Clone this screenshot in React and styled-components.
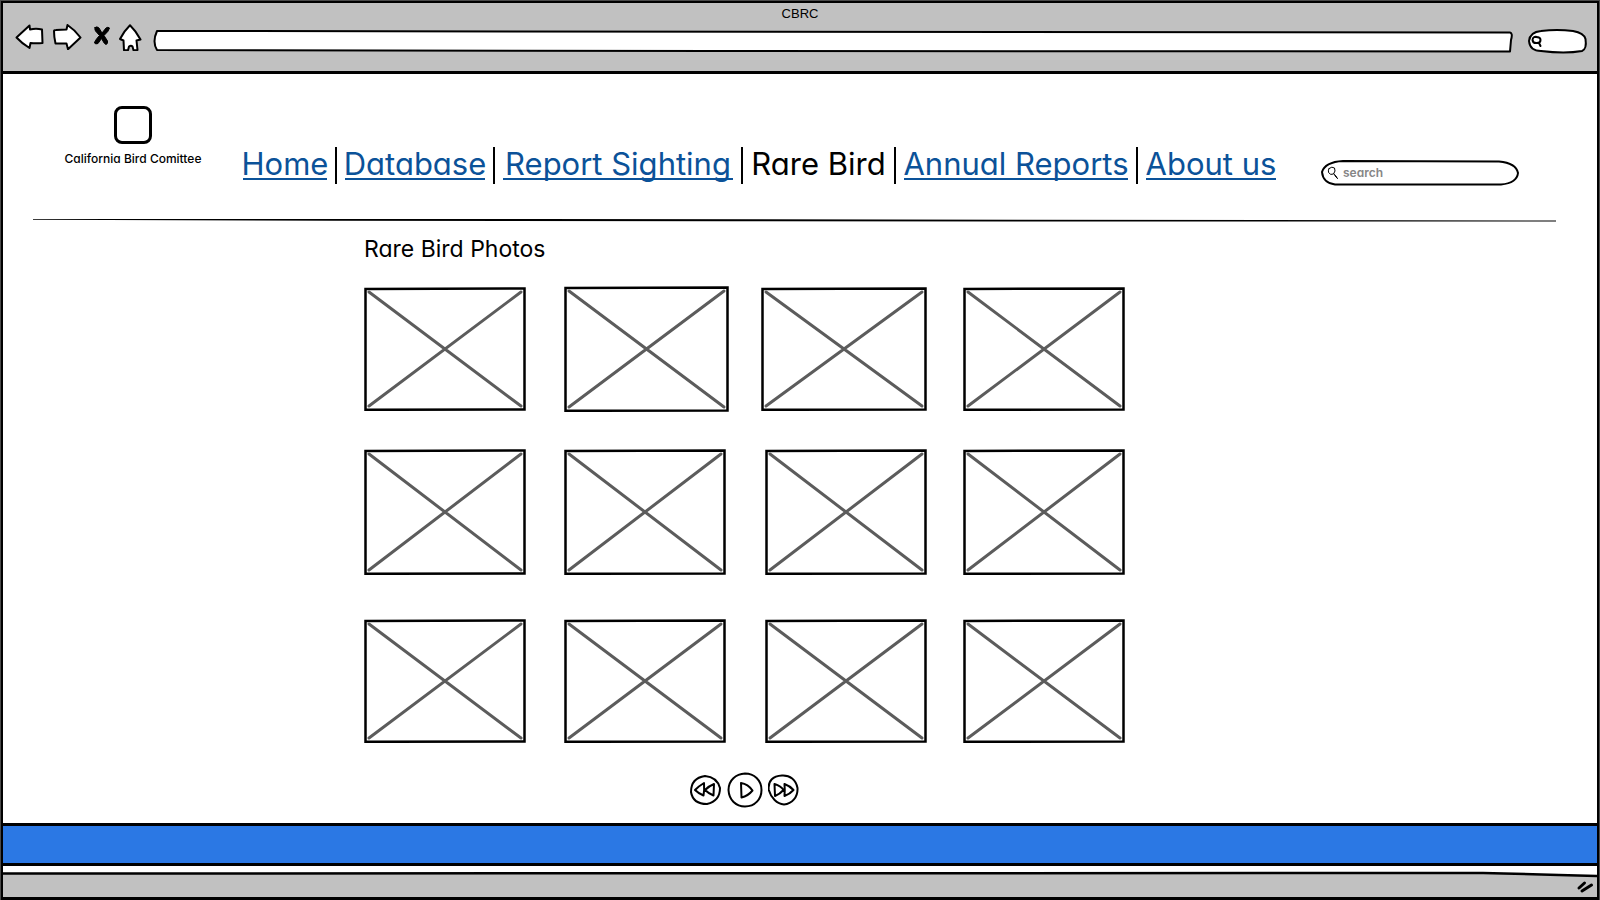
import React from "react";
import styled, { createGlobalStyle } from "styled-components";

const GlobalStyle = createGlobalStyle`
  * { box-sizing: border-box; }
  body {
    margin: 0;
    background: #fff;
    color: #000;
    font-family: Inter, "Open Sans", sans-serif;
    font-feature-settings: "cv11" 1;
  }
  button, input { font: inherit; color: inherit; }
`;

const Page = styled.div`
  min-height: 100vh;
  padding: 1px;
  display: flex;
  background: #4a4a4a;
`;

const Frame = styled.div`
  flex: 1;
  min-width: 0;
  display: flex;
  flex-direction: column;
  background: #fff;
  border: 3px solid #000;
  border-width: 2px 2px 3px;
`;

const BrowserBar = styled.header`
  height: 71px;
  padding-top: 1px;
  background: #c1c1c1;
  border-bottom: 3px solid #000;
`;

const WindowTitle = styled.div`
  height: 20px;
  line-height: 19px;
  text-align: center;
  font-family: "Liberation Sans", sans-serif;
  font-size: 13px;
`;

const Controls = styled.div`
  display: flex;
  align-items: center;
  gap: 12px;
  height: 34px;
  padding: 0 9px 0 12px;
`;

const IconGroup = styled.div`
  display: flex;
  align-self: flex-start;
  align-items: flex-start;
  gap: 8px;
`;

const IconButton = styled.button`
  display: block;
  padding: 0;
  border: 0;
  background: none;
  cursor: pointer;

  svg { display: block; }
`;

const Sketch = styled.svg`
  fill: ${(p) => p.$fill || "#fff"};
  stroke: #000;
  stroke-width: ${(p) => p.$weight || 2}px;
  stroke-linecap: round;
  stroke-linejoin: round;
`;

const Field = styled.label`
  position: relative;
  display: flex;
  align-items: center;
  flex: ${(p) => (p.$width ? `0 0 ${p.$width}px` : "1")};
  height: ${(p) => p.$height}px;
  min-width: 0;
`;

const Outline = styled(Sketch)`
  position: absolute;
  inset: 0;
  width: 100%;
  height: 100%;
  overflow: visible;

  path { vector-effect: non-scaling-stroke; }
`;

const FieldIcon = styled(Sketch)`
  position: absolute;
  left: ${(p) => p.$left}px;
`;

const FieldInput = styled.input`
  position: relative;
  width: 100%;
  height: 100%;
  padding: 0 12px 2px 22px;
  border: 0;
  outline: 0;
  background: transparent;
  font-size: 12px;
  font-weight: 600;

  &::placeholder { color: #868686; opacity: 1; }
`;

const SiteHeader = styled.div`
  display: flex;
  align-items: flex-start;
  height: 144px;
  padding: 32px 78px 0 58px;
`;

const Brand = styled.div`
  flex: 0 0 144px;
  display: flex;
  flex-direction: column;
  align-items: center;
  gap: 6px;
  margin-right: 38px;
  font-size: 12px;
  font-weight: 500;
  line-height: 18px;
  white-space: nowrap;
`;

const Logo = styled.div`
  width: 38px;
  height: 38px;
  border: 3px solid #000;
  border-radius: 8px;
`;

const Nav = styled.nav`
  display: flex;
  gap: 8px;
  margin-top: 41px;
`;

const NavItem = styled.div`
  flex: 0 0 ${(p) => p.$width}px;
  min-width: 0;
  display: flex;
  justify-content: center;
  height: 33px;
  font-size: 31px;
  line-height: 34px;
  white-space: nowrap;
`;

const NavLink = styled.a`
  flex: 1;
  min-width: 0;
  display: flex;
  justify-content: center;
  border-bottom: 2px solid #0b5299;
  color: #0b5299;
  text-decoration: none;
`;

const Divider = styled.span`
  width: 2px;
  height: 37px;
  background: #000;
`;

const SearchSlot = styled.div`
  display: flex;
  margin: 54px 0 0 auto;
`;

const Rule = styled.svg`
  display: block;
  width: calc(100% - 71px);
  height: 5px;
  margin-left: 30px;
`;

const Main = styled.main`
  flex: 1;
  padding: 12px 0 15px 361px;
`;

const Title = styled.h1`
  margin: 0;
  font-size: 23px;
  font-weight: 400;
  line-height: 28px;
`;

const Gallery = styled.div`
  display: flex;
  flex-direction: column;
  margin-top: 23px;
`;

const Row = styled.div`
  display: grid;
  grid-template-columns: ${(p) => p.$columns};
  align-items: center;
  margin-bottom: ${(p) => p.$after}px;
`;

const Placeholder = styled.svg`
  display: block;
  width: ${(p) => p.$width}px;
  height: ${(p) => p.$height}px;
`;

const Player = styled.div`
  display: flex;
  align-items: center;
  gap: 5px;
  margin: 29px 0 0 325px;
`;

const BlueBar = styled.footer`
  height: 43px;
  background: #2b78e4;
  border: solid #000;
  border-width: 3px 0;
`;

const StatusBar = styled.div`
  position: relative;
  height: 31px;
`;

const StatusFill = styled.svg`
  display: block;
  width: 100%;
  height: 31px;
`;

const Grip = styled(Sketch)`
  position: absolute;
  right: 3px;
  bottom: 2px;
`;

const links = [
  { label: "Home", width: 84 },
  { label: "Database", width: 140 },
  { label: "Report Sighting", width: 230 },
  { label: "Rare Bird", width: 135, current: true },
  { label: "Annual Reports", width: 224 },
  { label: "About us", width: 130 },
];

const rows = [
  { columns: "200px 197px 202px 162px", widths: [162, 165, 166, 162], heights: [124, 126, 124, 124], after: 37 },
  { columns: "200px 201px 198px 162px", widths: [162, 162, 162, 162], heights: [126, 126, 126, 126], after: 44 },
  { columns: "200px 201px 198px 162px", widths: [162, 162, 162, 162], heights: [124, 124, 124, 124], after: 0 },
];

function Photo({ width: w, height: h }) {
  return (
    <Placeholder $width={w} $height={h} viewBox={`0 0 ${w} ${h}`} role="img" aria-label="Bird photo">
      <path d={`M1.5 2 L${w - 1.5} 1.5 V${h - 1.5} L1.5 ${h - 1.2} Z`} fill="#fff" stroke="#000" strokeWidth="2.5" />
      <path
        d={`M5 5 L${w - 5} ${h - 5} M${w - 5} 5 L5 ${h - 5}`}
        stroke="#5c5c5c"
        strokeWidth="3"
        strokeLinecap="round"
      />
    </Placeholder>
  );
}

export default function App() {
  return (
    <>
      <GlobalStyle />
      <Page>
        <Frame>
          <BrowserBar>
            <WindowTitle>CBRC</WindowTitle>
            <Controls>
              <IconGroup>
                <IconButton aria-label="Back">
                  <Sketch width="30" height="26" viewBox="15 24 30 26">
                    <path d="M16.5 37.5 L29.5 25.5 L30 29.5 Q36 28 42 29.5 L42.5 43 Q36 43.5 30.5 43 L29.5 48 Q22 43.5 16.5 37.5Z" />
                  </Sketch>
                </IconButton>
                <IconButton aria-label="Forward">
                  <Sketch width="30" height="26" viewBox="53 24 30 26">
                    <path d="M54 31 Q54 30 56 30 L66.5 29.5 L67.5 25 Q75 30 80.5 37.5 L68 49.2 L66.5 43.5 L55.5 43.5 Q54 37 54 31Z" />
                  </Sketch>
                </IconButton>
                <IconButton aria-label="Stop">
                  <Sketch width="20" height="26" viewBox="91 24 20 26" $fill="#000" $weight={1}>
                    <path d="M95 27.5 Q97 26 99 28 L102 33 L106 28 Q108 26.5 109.500 28 Q109 31 104 35.500 L107.500 41 Q108 44 106 44.500 Q104.500 44.500 101.500 38.500 L98 43.500 Q95.500 44.500 94.500 43 Q94.500 41 99.500 35.500 L95.500 31 Q94.500 29.500 95 27.5Z" />
                  </Sketch>
                </IconButton>
                <IconButton aria-label="Home">
                  <Sketch width="24" height="27" viewBox="119 23 24 27">
                    <path d="M120 38 Q124 30 130 24.2 Q136 30 140.500 38.500 L136.500 39.500 L137.500 49 L133.500 49.200 L132.500 45.500 Q131 44 129 45.500 L128 49.200 L124 49.200 L123.500 39.500Z" />
                  </Sketch>
                </IconButton>
              </IconGroup>
              <Field $height={22}>
                <Outline viewBox="0 0 1360 22" preserveAspectRatio="none" aria-hidden="true">
                  <path d="M2 1 L1355 2.500 Q1358 3 1356 10 L1355 21.500 L560 21 L2 20 Q-3 12 2 1Z" />
                </Outline>
                <FieldInput aria-label="Address" />
              </Field>
              <Field $height={24} $width={61}>
                <Outline viewBox="0 0 61 24" preserveAspectRatio="none" aria-hidden="true">
                  <path d="M2 12 Q3 3 14 2 Q30 0 46 2 Q57 4 58.500 10 Q60 20 55 22 Q38 25 14 22 Q3 22 2 12Z" />
                </Outline>
                <FieldIcon $left={4} $fill="none" width="12" height="14" viewBox="0 0 12 14" aria-hidden="true">
                  <path d="M6 3 Q2 2 1.500 6 Q2 9.500 6 9 Q9.500 9 9.500 6 Q9.500 3 5 3 M8 9 L9.500 12" />
                </FieldIcon>
                <FieldInput aria-label="Browser search" />
              </Field>
            </Controls>
          </BrowserBar>

          <SiteHeader>
            <Brand>
              <Logo />
              California Bird Comittee
            </Brand>
            <Nav aria-label="Main">
              {links.map(({ label, width, current }, i) => (
                <React.Fragment key={label}>
                  {i > 0 && <Divider />}
                  <NavItem $width={width}>
                    {current ? <span aria-current="page">{label}</span> : <NavLink href="#">{label}</NavLink>}
                  </NavItem>
                </React.Fragment>
              ))}
            </Nav>
            <SearchSlot>
              <Field $height={26} $width={198}>
                <Outline viewBox="0 0 198 26" preserveAspectRatio="none" aria-hidden="true">
                  <path d="M1 12 Q4 2 22 1 L178 1.500 Q195 3 197 13 Q196 23 180 24.500 L14 24.500 Q2 23 1 12Z" />
                </Outline>
                <FieldIcon $left={6} $fill="none" $weight={1} width="12" height="14" viewBox="0 0 12 14" aria-hidden="true">
                  <path d="M2 2.500 Q5 0 7.500 2 Q9 5 6.500 8 Q3.500 9.500 1.500 6.500 Q1 4 2 2.500 M7 8 L9.500 11.500 M8 9 L10 12 M8.500 10 L10.500 12.500" />
                </FieldIcon>
                <FieldInput placeholder="search" aria-label="Search" />
              </Field>
            </SearchSlot>
          </SiteHeader>
          <Rule viewBox="0 0 1524 5" preserveAspectRatio="none" aria-hidden="true">
            <path d="M0 1 L500 1 L1524 2.500 L1524 3.600 L700 3.300 L300 2.800 L0 1.800Z" />
          </Rule>

          <Main>
            <Title>Rare Bird Photos</Title>
            <Gallery>
              {rows.map((row, r) => (
                <Row key={r} $columns={row.columns} $after={row.after}>
                  {row.widths.map((w, i) => (
                    <Photo key={i} width={w} height={row.heights[i]} />
                  ))}
                </Row>
              ))}
            </Gallery>
            <Player>
              <IconButton aria-label="Rewind">
                <Sketch width="33" height="32" viewBox="0 0 33 32">
                  <path d="M16 2 Q28 3 31 14 Q31 27 18 30 Q4 30 2 18 Q2 4 16 2Z" />
                  <path d="M15 9 Q15.500 16 14.500 21.500 Q9 19 6 16 Q10 12 15 9Z M25 10 L24.500 21.500 Q19 19 16 16 Q20 12 25 10Z" />
                </Sketch>
              </IconButton>
              <IconButton aria-label="Play">
                <Sketch width="36" height="36" viewBox="0 0 36 36">
                  <path d="M18 1.500 C27 1.500 34.500 8 34.500 18 C34.500 27 28 34.500 18 34.500 C9 34.500 2 28 1.500 18 C1.500 8 9 2 18 1.500Z" />
                  <path d="M14 11 Q21 12 25.500 18.500 Q21 24 14.500 25.500Z" />
                </Sketch>
              </IconButton>
              <IconButton aria-label="Fast forward">
                <Sketch width="32" height="32" viewBox="1 0 32 32">
                  <path d="M15 1.500 C23 1 29 6 30.500 14 C31 23 25 30 17 30.500 C10 30 4 24 1.800 16 C0.500 7 6 2 15 1.500Z" />
                  <path d="M7.500 10 Q14 12 16.500 16 Q13 20 8 22Z M17.500 10 Q23 12 26.500 16 Q23 20 17.500 22 Q18 16 17.500 10Z" />
                </Sketch>
              </IconButton>
            </Player>
          </Main>

          <BlueBar />
          <StatusBar>
            <StatusFill viewBox="0 0 1594 31" preserveAspectRatio="none" aria-hidden="true">
              <path d="M-3 7.500 L1480 7 Q1530 8 1597 10 V34 H-3Z" fill="#c1c1c1" stroke="#000" strokeWidth="2.500" />
            </StatusFill>
            <Grip $weight={3} width="18" height="16" viewBox="0 0 18 16" aria-hidden="true">
              <path d="M3 9 L8.500 4 M6 12 L15.500 6" />
            </Grip>
          </StatusBar>
        </Frame>
      </Page>
    </>
  );
}
